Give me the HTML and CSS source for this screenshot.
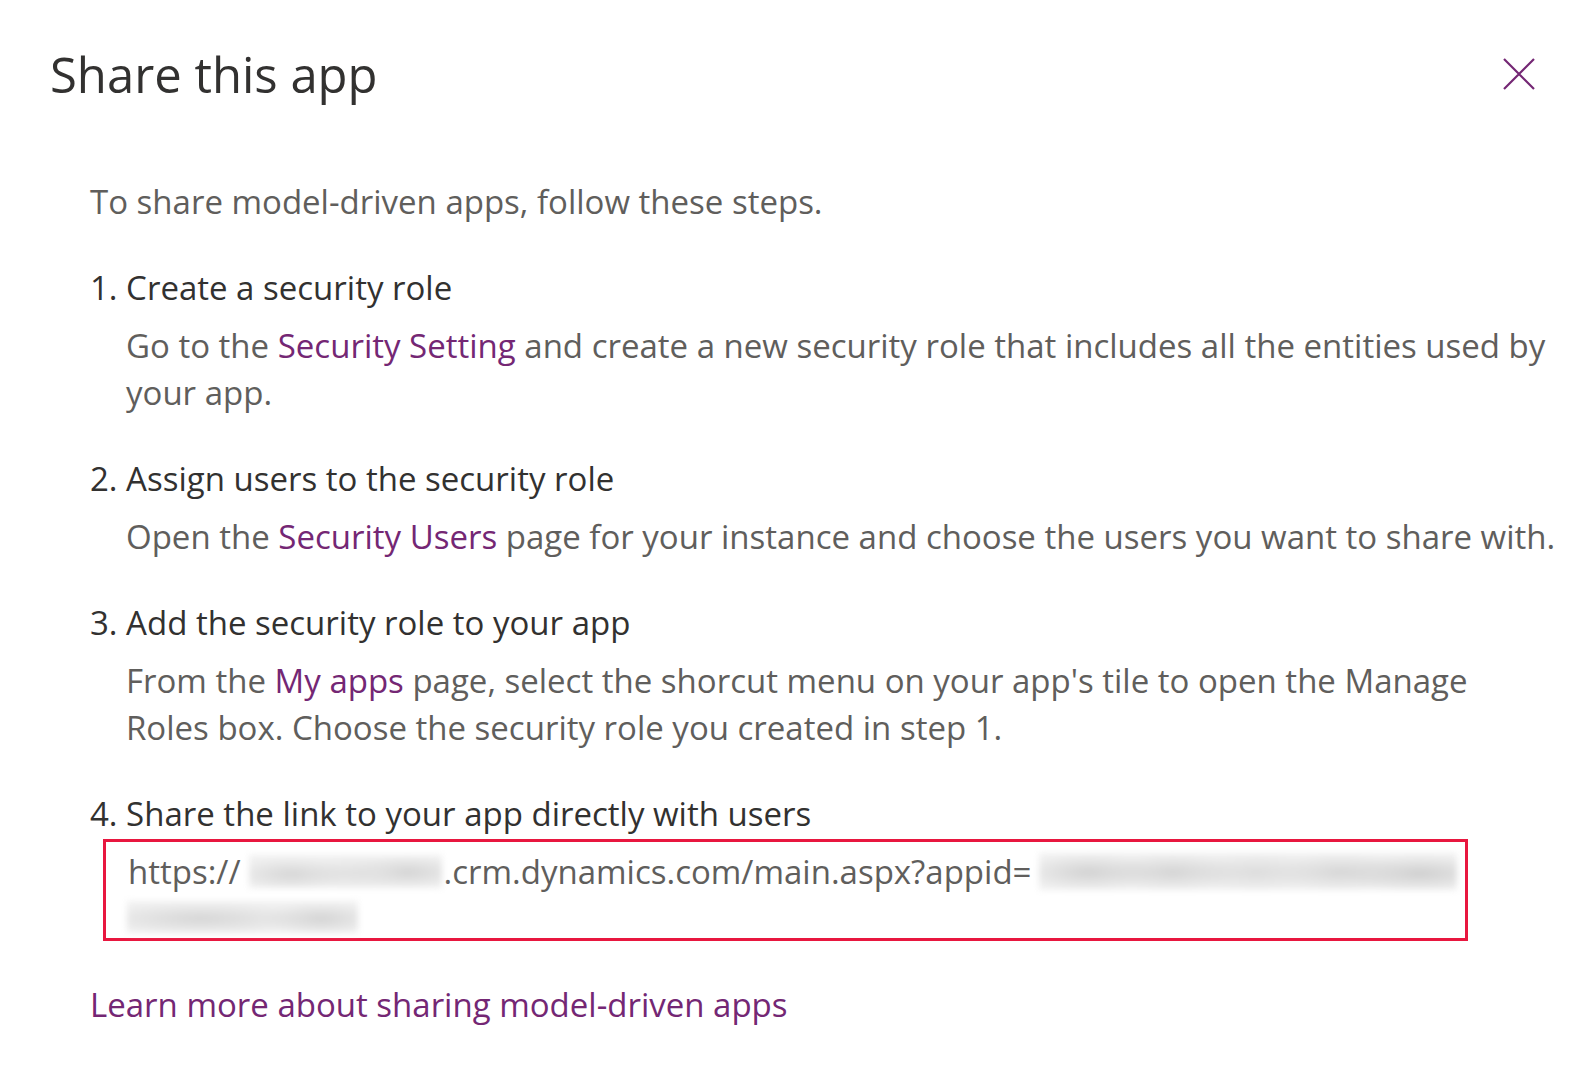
FILE: index.html
```html
<!DOCTYPE html>
<html lang="en">
<head>
<meta charset="utf-8">
<title>Share this app</title>
<link rel="stylesheet" href="styles.css">
</head>
<body>
<div class="dialog">
  <div class="header">
    <h1 class="title">Share this app</h1>
    <button class="close" aria-label="Close">
      <svg width="32" height="32" viewBox="0 0 32 32"><path d="M1 1 L31 31 M31 1 L1 31" stroke="#742774" stroke-width="2.2" fill="none"/></svg>
    </button>
  </div>
  <div class="content">
    <p class="intro">To share model-driven apps, follow these steps.</p>
    <div class="step">
      <div class="step-title">1. Create a security role</div>
      <div class="step-desc">Go to the <a class="link" href="#">Security Setting</a> and create a new security role that includes all the entities used by your app.</div>
    </div>
    <div class="step">
      <div class="step-title">2. Assign users to the security role</div>
      <div class="step-desc">Open the <a class="link" href="#">Security Users</a> page for your instance and choose the users you want to share with.</div>
    </div>
    <div class="step">
      <div class="step-title">3. Add the security role to your app</div>
      <div class="step-desc step-desc-narrow">From the <a class="link" href="#">My apps</a> page, select the shorcut menu on your app's tile to open the Manage Roles box. Choose the security role you created in step 1.</div>
    </div>
    <div class="step step-last">
      <div class="step-title">4. Share the link to your app directly with users</div>
      <div class="url-box">
        <div class="url-line">https://<span class="blur blur-a"></span>.crm.dynamics.com/main.aspx?appid=<span class="blur blur-b"></span></div>
        <div class="url-line"><span class="blur blur-c"></span></div>
      </div>
    </div>
    <a class="learn" href="#">Learn more about sharing model-driven apps</a>
  </div>
</div>
</body>
</html>
```

FILE: styles.css
```css
html, body {
  margin: 0;
  padding: 0;
  background: #ffffff;
  overflow: hidden;
}

body {
  font-family: "Open Sans", "Noto Sans", "Liberation Sans", sans-serif;
  color: #605e5c;
}

.dialog {
  padding: 41px 50px 0 50px;
}

.header {
  display: flex;
  justify-content: space-between;
  align-items: center;
}

.title {
  margin: 0;
  font-weight: 400;
  font-size: 49px;
  line-height: 66px;
  color: #323130;
}

.close {
  background: none;
  border: none;
  padding: 0;
  margin-right: 9px;
  width: 32px;
  height: 32px;
  display: flex;
}

.content {
  padding-left: 40px;
  font-size: 33px;
  line-height: 47px;
}

.intro {
  margin: 71px 0 0 0;
}

.step {
  margin-top: 39px;
}

.step-title {
  color: #323130;
}

.step-desc {
  margin-top: 11px;
  margin-left: 36px;
  width: 1445px;
}

.step-desc-narrow {
  width: 1410px;
}

.link {
  color: #742774;
  text-decoration: none;
}

.url-box {
  margin-top: 2px;
  margin-left: 13px;
  width: 1337px;
  height: 89px;
  border: 3px solid #e8173f;
  padding: 7px 0 0 22px;
  line-height: 45px;
}

.url-line {
  height: 45px;
  display: flex;
  align-items: center;
  white-space: nowrap;
}

.blur {
  display: inline-block;
  background-color: #f0f0f0;
  filter: blur(3px);
}

.blur-a {
  width: 193px;
  height: 33px;
  margin: 0 2px 0 8px;
  background-image:
    radial-gradient(ellipse 60px 16px at 22% 58%, #d6d6d6, transparent),
    radial-gradient(ellipse 50px 16px at 55% 55%, #e0e0e0, transparent),
    radial-gradient(ellipse 60px 16px at 82% 52%, #d4d4d4, transparent);
}

.blur-b {
  width: 418px;
  height: 37px;
  margin-left: 8px;
  background-image:
    radial-gradient(ellipse 70px 18px at 12% 52%, #d2d2d2, transparent),
    radial-gradient(ellipse 70px 18px at 32% 52%, #d4d4d4, transparent),
    radial-gradient(ellipse 70px 18px at 52% 52%, #dcdcdc, transparent),
    radial-gradient(ellipse 70px 18px at 72% 52%, #d6d6d6, transparent),
    radial-gradient(ellipse 80px 18px at 91% 55%, #cfcfcf, transparent);
}

.blur-c {
  width: 231px;
  height: 32px;
  margin-left: -1px;
  background-image:
    radial-gradient(ellipse 110px 16px at 32% 55%, #d6d6d6, transparent),
    radial-gradient(ellipse 60px 16px at 84% 55%, #d4d4d4, transparent);
}

.learn {
  display: inline-block;
  margin-top: 40px;
  color: #742774;
  text-decoration: none;
}
```
